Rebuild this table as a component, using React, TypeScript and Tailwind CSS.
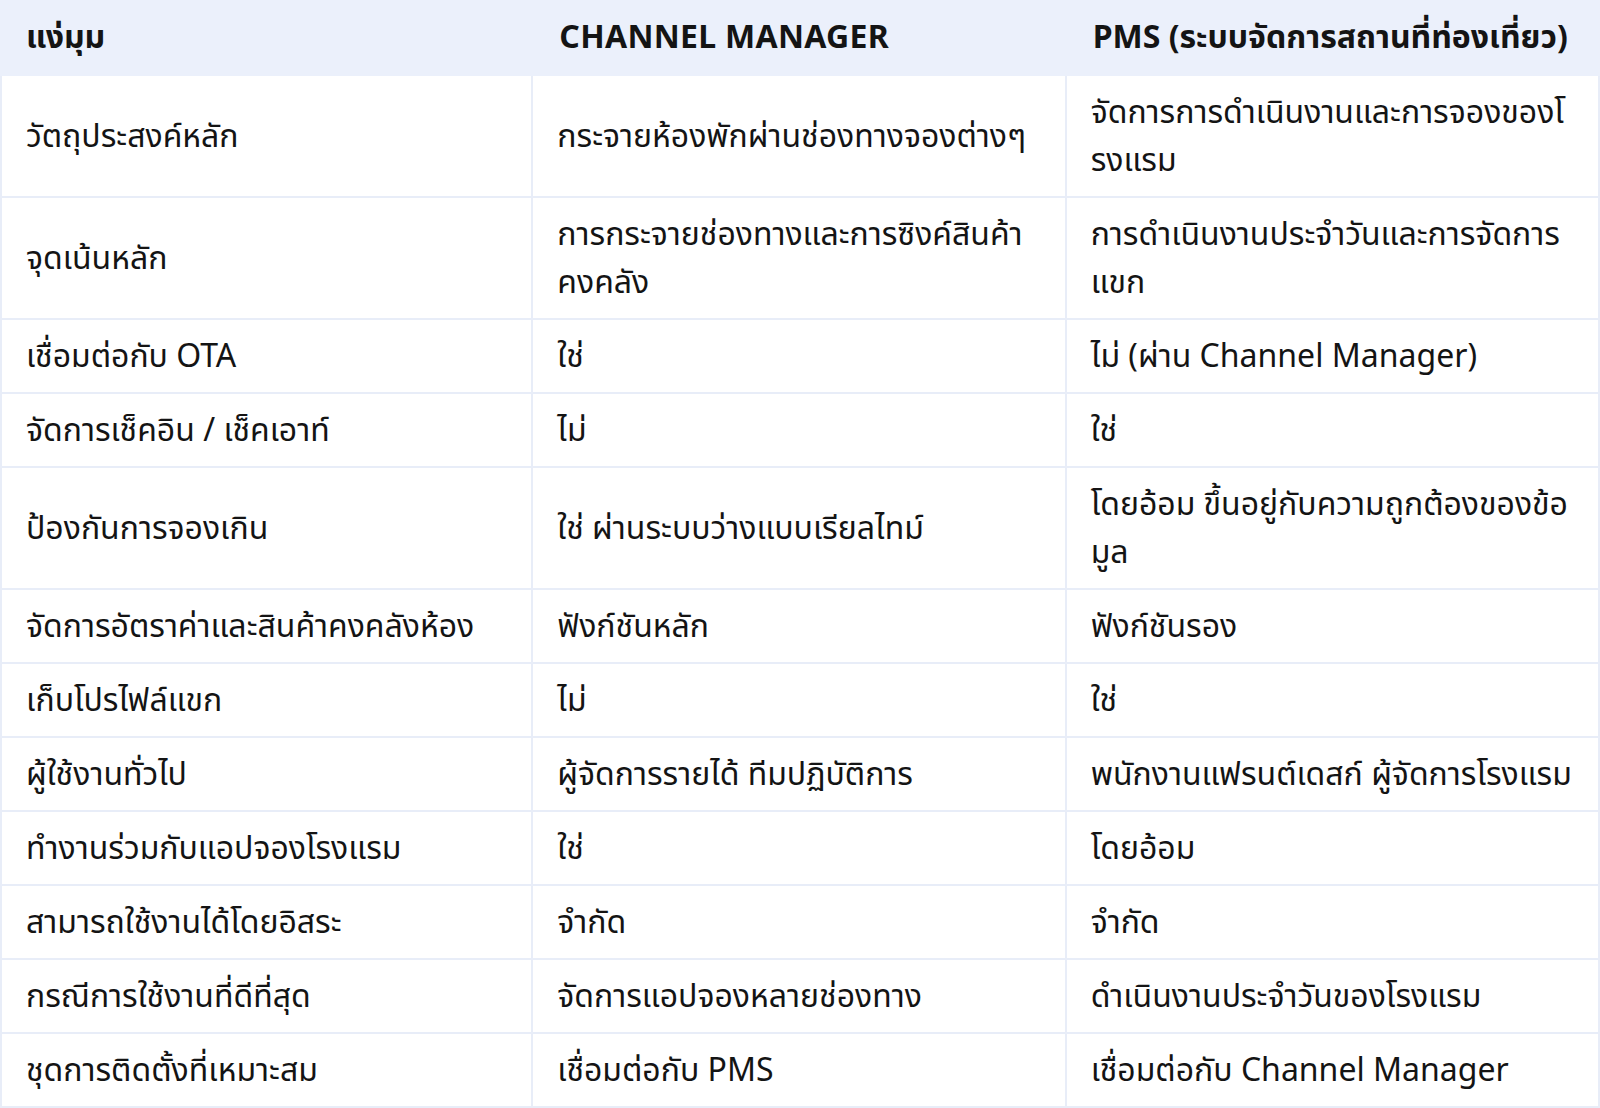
import React from "react";

const rows: [string, string, string][] = [
  ["วัตถุประสงค์หลัก", "กระจายห้องพักผ่านช่องทางจองต่างๆ", "จัดการการดำเนินงานและการจองของโ\nรงแรม"],
  ["จุดเน้นหลัก", "การกระจายช่องทางและการซิงค์สินค้า\nคงคลัง", "การดำเนินงานประจำวันและการจัดการ\nแขก"],
  ["เชื่อมต่อกับ OTA", "ใช่", "ไม่ (ผ่าน Channel Manager)"],
  ["จัดการเช็คอิน / เช็คเอาท์", "ไม่", "ใช่"],
  ["ป้องกันการจองเกิน", "ใช่ ผ่านระบบว่างแบบเรียลไทม์", "โดยอ้อม ขึ้นอยู่กับความถูกต้องของข้อ\nมูล"],
  ["จัดการอัตราค่าและสินค้าคงคลังห้อง", "ฟังก์ชันหลัก", "ฟังก์ชันรอง"],
  ["เก็บโปรไฟล์แขก", "ไม่", "ใช่"],
  ["ผู้ใช้งานทั่วไป", "ผู้จัดการรายได้ ทีมปฏิบัติการ", "พนักงานแฟรนต์เดสก์ ผู้จัดการโรงแรม"],
  ["ทำงานร่วมกับแอปจองโรงแรม", "ใช่", "โดยอ้อม"],
  ["สามารถใช้งานได้โดยอิสระ", "จำกัด", "จำกัด"],
  ["กรณีการใช้งานที่ดีที่สุด", "จัดการแอปจองหลายช่องทาง", "ดำเนินงานประจำวันของโรงแรม"],
  ["ชุดการติดตั้งที่เหมาะสม", "เชื่อมต่อกับ PMS", "เชื่อมต่อกับ Channel Manager"],
];

export default function App() {
  return (
    <div
      className="w-[1600px] h-[1108px] bg-white text-[#141414] overflow-hidden"
      style={{ fontFamily: '"Noto Sans", "Noto Sans Thai", "Noto Sans Thai UI", sans-serif' }}
    >
      <table className="w-full table-fixed border-separate border-spacing-0">
        <thead>
          <tr className="bg-[#ebf0fb]">
            <th className="w-1/3 text-left font-bold text-[32px] leading-[48px] px-[26px] pt-3 pb-4">แง่มุม</th>
            <th className="w-1/3 text-left font-bold text-[32px] leading-[48px] px-[26px] pt-3 pb-4 tracking-[0.3px]">CHANNEL MANAGER</th>
            <th className="w-1/3 text-left font-bold text-[32px] leading-[48px] px-[26px] pt-3 pb-4">PMS (ระบบจัดการสถานที่ท่องเที่ยว)</th>
          </tr>
        </thead>
        <tbody>
          {rows.map((r, i) => (
            <tr key={i}>
              {r.map((c, j) => (
                <td
                  key={j}
                  className={
                    "align-middle text-[32px] leading-[48px] pl-6 pr-2 pt-[11px] pb-[13px] border-b-2 border-r-2 border-[#e8edf8] whitespace-nowrap " +
                    (j === 0 ? "border-l-2" : "")
                  }
                >
                  {c.split("\n").map((line, k) => (
                    <React.Fragment key={k}>
                      {k > 0 && <br />}
                      {line}
                    </React.Fragment>
                  ))}
                </td>
              ))}
            </tr>
          ))}
        </tbody>
      </table>
    </div>
  );
}
